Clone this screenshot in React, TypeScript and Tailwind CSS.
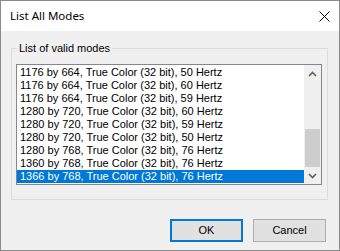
const modes = [
  "1176 by 664, True Color (32 bit), 50 Hertz",
  "1176 by 664, True Color (32 bit), 60 Hertz",
  "1176 by 664, True Color (32 bit), 59 Hertz",
  "1280 by 720, True Color (32 bit), 60 Hertz",
  "1280 by 720, True Color (32 bit), 59 Hertz",
  "1280 by 720, True Color (32 bit), 50 Hertz",
  "1280 by 768, True Color (32 bit), 76 Hertz",
  "1360 by 768, True Color (32 bit), 76 Hertz",
  "1366 by 768, True Color (32 bit), 76 Hertz",
];

function Chevron({ up }: { up?: boolean }) {
  return (
    <svg width="9" height="6" viewBox="0 0 9 6">
      <path
        d={up ? "M1 5 L4.5 1.5 L8 5" : "M1 1 L4.5 4.5 L8 1"}
        fill="none"
        stroke="#606060"
        strokeWidth="1.6"
      />
    </svg>
  );
}

export default function App() {
  return (
    <div className="w-[340px] h-[251px] flex flex-col border border-[#8a8a8a] bg-[#f0f0f0] text-[11px] text-black font-['Liberation_Sans',Arial,sans-serif] leading-none">
      {/* Title bar */}
      <div className="h-[30px] bg-white flex items-center justify-between pl-[9px] pr-[9px]">
        <span className="text-[11.5px] font-['Noto_Sans',sans-serif]">List All Modes</span>
        <svg width="11" height="11" viewBox="0 0 11 11">
          <path d="M0.5 0.5 L10.5 10.5 M10.5 0.5 L0.5 10.5" stroke="#000" strokeWidth="1" />
        </svg>
      </div>

      {/* Body */}
      <div className="flex-1 flex flex-col pt-[17px] pl-[10px] pr-[11px]">
        {/* Group box */}
        <div className="relative h-[152px] border border-[#dcdcdc] pt-[15px] pl-[4px] pr-[5px]">
          <span className="absolute left-[5px] top-[-8px] px-[2px] bg-[#f0f0f0] leading-[15px]">
            List of valid modes
          </span>

          {/* Listbox */}
          <div className="h-[121px] border border-[#828790] bg-white flex">
            <div className="flex-1 flex flex-col pt-[1px]">
              {modes.map((m, i) => (
                <div
                  key={i}
                  className={
                    i === modes.length - 1
                      ? "h-[13px] flex items-center pl-[3px] bg-[#0078d7] text-white whitespace-nowrap"
                      : "h-[13px] flex items-center pl-[3px] whitespace-nowrap"
                  }
                >
                  {m}
                </div>
              ))}
            </div>

            {/* Scrollbar */}
            <div className="w-[17px] bg-[#f0f0f0] flex flex-col">
              <div className="h-[17px] flex items-center justify-center">
                <Chevron up />
              </div>
              <div className="flex-1 flex flex-col justify-end px-[1px]">
                <div className="h-[38px] bg-[#cdcdcd]" />
              </div>
              <div className="h-[17px] flex items-center justify-center">
                <Chevron />
              </div>
            </div>
          </div>
        </div>

        {/* Buttons */}
        <div className="flex justify-end gap-[10px] mt-[19px] pr-[2px]">
          <button className="w-[73px] h-[23px] border-2 border-[#0078d7] bg-[#e1e1e1] flex items-center justify-center">
            OK
          </button>
          <button className="w-[73px] h-[23px] border border-[#adadad] bg-[#e1e1e1] flex items-center justify-center">
            Cancel
          </button>
        </div>
      </div>
    </div>
  );
}
